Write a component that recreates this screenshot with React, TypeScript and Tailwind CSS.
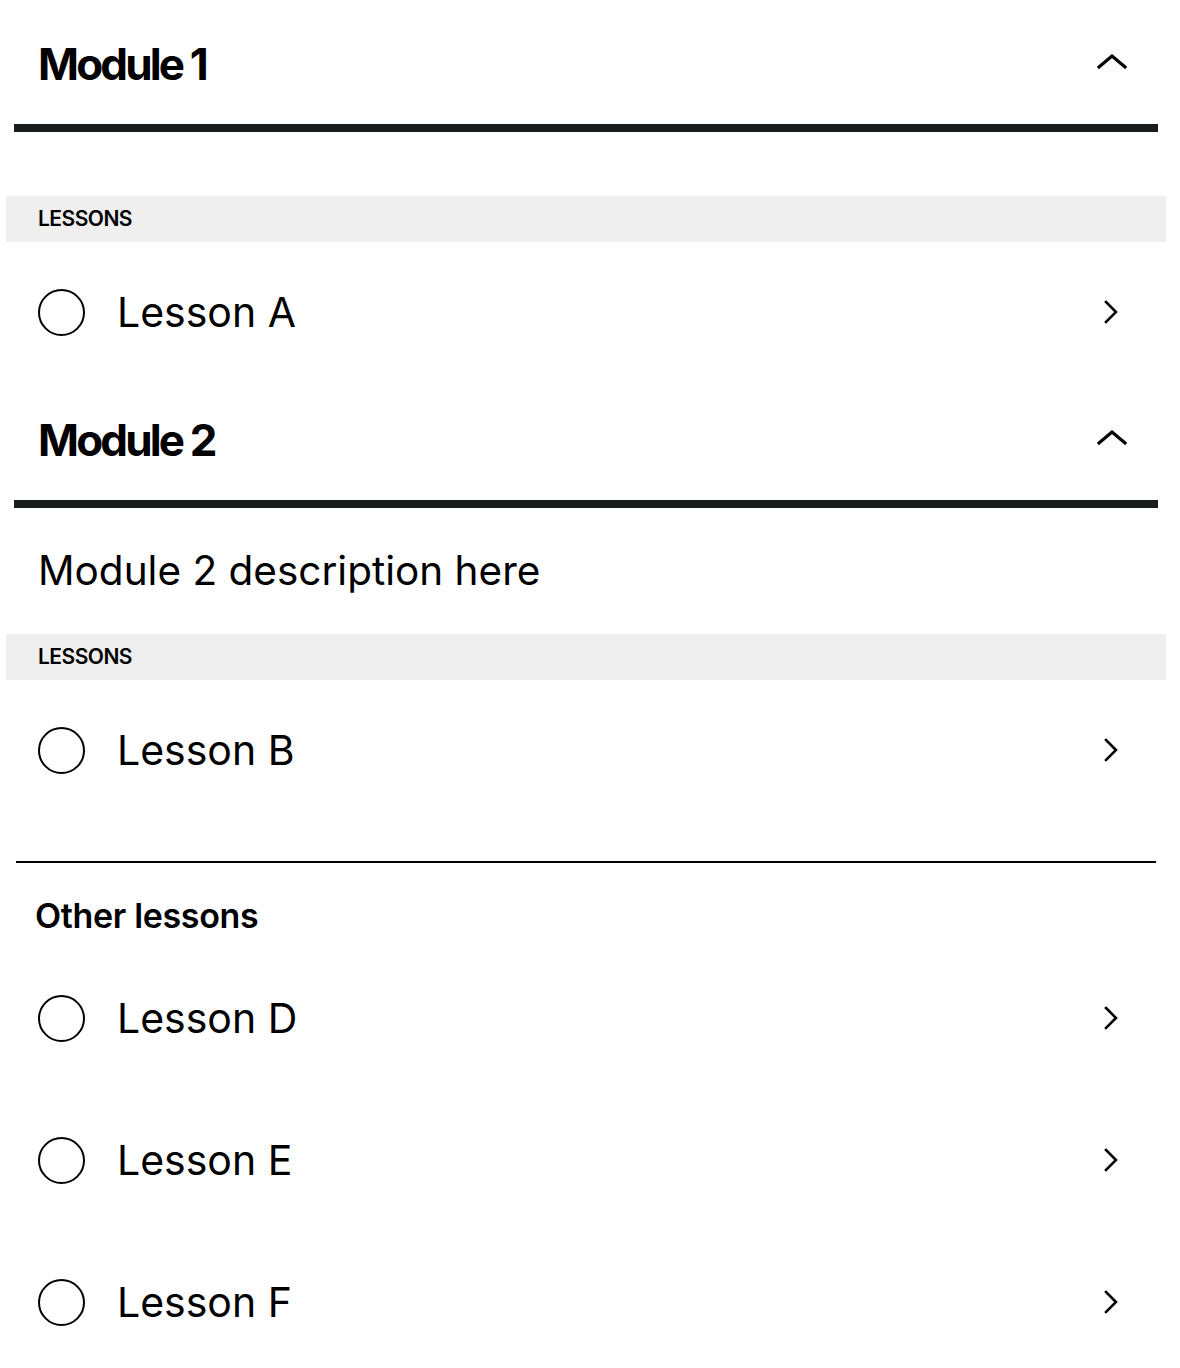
import { ReactNode } from 'react';

const FONT = { fontFamily: 'Inter, "Noto Sans", sans-serif' };

function ChevronUp() {
  return (
    <svg width="30" height="16" viewBox="0 0 30 16" fill="none" stroke="#000" strokeWidth="3.2" strokeLinecap="square" strokeLinejoin="miter" className="mb-[6px]">
      <polyline points="2,13 15,2 28,13" />
    </svg>
  );
}

function ChevronRight() {
  return (
    <svg width="14" height="24" viewBox="0 0 14 24" fill="none" stroke="#000" strokeWidth="2.6" strokeLinecap="square" strokeLinejoin="miter">
      <polyline points="2,2 12,12 2,22" />
    </svg>
  );
}

function LessonRow({ title, height = 'h-[140px]' }: { title: string; height?: string }) {
  return (
    <div className={`flex items-center ${height} pl-8 pr-[48px]`}>
      <div className="w-[47px] h-[47px] rounded-full border-2 border-black flex-shrink-0" />
      <span className="ml-[32px] flex-1 text-[41px] leading-[48px] text-black">{title}</span>
      <ChevronRight />
    </div>
  );
}

function LessonsLabel() {
  return (
    <div className="h-[46px] bg-[#efefef] flex items-center pl-8">
      <span className="text-[21px] font-semibold tracking-tight text-black">LESSONS</span>
    </div>
  );
}

function Module({ title, description, children }: { title: string; description?: string; children: ReactNode }) {
  return (
    <section>
      <div className="mx-2 h-[126px] border-b-8 border-[#1b1d1f] flex items-center justify-between pl-6 pr-[31px]">
        <h2 className="text-[44px] leading-none font-bold tracking-[-0.065em] text-black -mt-0.5">{title}</h2>
        <ChevronUp />
      </div>
      {description ? (
        <div className="h-[126px] flex items-center pl-8">
          <p className="text-[40.5px] leading-[48px] text-black">{description}</p>
        </div>
      ) : (
        <div className="h-16" />
      )}
      <LessonsLabel />
      {children}
    </section>
  );
}

export default function App() {
  return (
    <div className="bg-white min-h-screen pt-[6px] pl-[6px] pr-[14px]" style={FONT}>
      <Module title="Module 1">
        <LessonRow title="Lesson A" />
      </Module>
      <Module title="Module 2" description="Module 2 description here">
        <LessonRow title="Lesson B" />
      </Module>

      {/* Other lessons */}
      <div className="mt-[41px] mx-[10px] border-t-2 border-black" />
      <div className="h-[84px] flex items-center pl-[29px] pt-[22px]">
        <h3 className="text-[34px] leading-[40px] font-semibold tracking-[-0.01em] text-black">Other lessons</h3>
      </div>
      <LessonRow title="Lesson D" height="h-[142px]" />
      <LessonRow title="Lesson E" height="h-[142px]" />
      <LessonRow title="Lesson F" height="h-[142px]" />
    </div>
  );
}
